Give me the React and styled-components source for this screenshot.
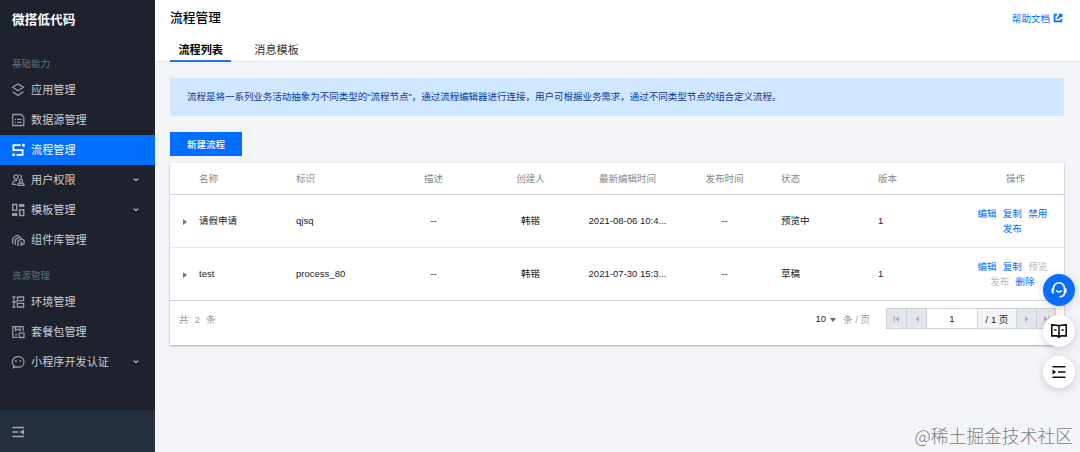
import React, { useState } from 'react';
import styled, { createGlobalStyle } from 'styled-components';

const GlobalStyle = createGlobalStyle`
  * {
    box-sizing: border-box;
  }

  body {
    margin: 0;
    font-family: 'Liberation Sans', 'Noto Sans CJK SC', sans-serif;
    font-size: 9.54px;
    color: #222;
  }

  button {
    font-family: inherit;
    border: 0;
    padding: 0;
  }
`;

const Page = styled.div`
  display: flex;
  position: relative;
  width: 1080px;
  height: 452px;
  overflow: hidden;
  background: #f3f4f8;
`;

const Sidebar = styled.aside`
  display: flex;
  flex-direction: column;
  flex: none;
  width: 155px;
  background: #1e222d;
  color: #c9ccd2;
`;

const Brand = styled.div`
  height: 54px;
  padding: 9px 12px 0;
  color: #fff;
  font-size: 12.7px;
  font-weight: 700;
  line-height: 22px;
`;

const SectionTitle = styled.div`
  height: 21px;
  margin-top: ${(props) => (props.$spaced ? '11px' : '0')};
  padding-left: 12px;
  line-height: 20px;
  color: #5f7078;
`;

const Nav = styled.nav`
  flex: 1;
`;

const NavItem = styled.div`
  display: flex;
  align-items: center;
  height: 30px;
  padding: 0 15px 0 11px;
  font-size: 11.13px;
  background: ${(props) => (props.$active ? '#006eff' : 'transparent')};
  color: ${(props) => (props.$active ? '#fff' : 'inherit')};

  > svg:first-child {
    margin-right: 6px;
    color: ${(props) => (props.$active ? '#fff' : '#959aa3')};
  }

  span {
    flex: 1;
    line-height: 16px;
  }
`;

const Collapse = styled.div`
  height: 42px;
  padding: 15px 0 0 11px;
  background: #262f3d;
  color: #a2a8b1;
`;

const Main = styled.main`
  flex: 1;
  min-width: 0;
`;

const Header = styled.header`
  height: 62px;
  padding: 8px 17px 0 15px;
  background: #fff;
  border-bottom: 1px solid #e4e6ea;
`;

const HeaderTop = styled.div`
  display: flex;
  justify-content: space-between;
  height: 32px;

  h1 {
    margin: 0;
    font-size: 12.72px;
    font-weight: 500;
    line-height: 19px;
    color: #000;
  }
`;

const HelpLink = styled.a`
  display: flex;
  align-items: center;
  gap: 3px;
  height: 20px;
  color: #006eff;
`;

const Tabs = styled.div`
  display: flex;
  gap: 15px;
`;

const Tab = styled.div`
  height: 22px;
  padding: 0 8px 0 8.4px;
  font-size: 11.13px;
  line-height: 21px;
  color: ${(props) => (props.$active ? '#000' : '#333')};
  font-weight: ${(props) => (props.$active ? 700 : 400)};
  border-bottom: 2px solid ${(props) => (props.$active ? '#1f75e8' : 'transparent')};
`;

const Content = styled.div`
  padding: 16px 16px 0 15px;
`;

const Notice = styled.div`
  height: 38px;
  padding-left: 17px;
  line-height: 38px;
  letter-spacing: -0.05px;
  white-space: nowrap;
  background: #cfe7ff;
  color: #0c3a9c;
`;

const CreateButton = styled.button`
  display: block;
  width: 72px;
  height: 24px;
  margin: 16px 0 7px;
  background: #006eff;
  color: #fff;
  font-size: 9.54px;
  font-weight: 500;
`;

const TableCard = styled.section`
  height: 182px;
  background: #fff;
  box-shadow: 0 1px 2px rgba(40, 50, 60, 0.4);
`;

const Row = styled.div`
  display: grid;
  grid-template-columns: 21px repeat(9, 97px);
  align-items: center;
  height: ${(props) => (props.$head ? 32 : 53)}px;
  border-bottom: 1px solid ${(props) => (props.$light ? '#e8eaed' : '#d3d6d9')};
  color: ${(props) => (props.$head ? '#888' : '#222')};
`;

const Cell = styled.div`
  padding: 0 8px;
  line-height: 14px;
  text-align: ${(props) => props.$align || 'left'};
  white-space: nowrap;
`;

const Expand = styled.div`
  margin: 2px 0 0 13px;
  width: 0;
  border: solid transparent;
  border-width: 3px 0 3px 4px;
  border-left-color: #777;
`;

const Actions = styled.div`
  display: flex;
  flex-wrap: wrap;
  justify-content: center;
  padding: 1px 8px 0;
`;

const Action = styled.a`
  margin-right: 6.3px;
  line-height: 14.8px;
  color: ${(props) => (props.$disabled ? '#bbb' : '#006eff')};
`;

const Footer = styled.div`
  display: flex;
  align-items: center;
  height: 35px;
  padding: 0 8px 0 9px;
  color: #999;
`;

const Total = styled.div`
  flex: 1;
  word-spacing: 3.4px;
`;

const PageSize = styled.div`
  display: flex;
  align-items: center;
  margin-right: 16px;

  b {
    font-weight: 400;
    color: #222;
  }
`;

const Caret = styled.i`
  margin: 2px 7px 0 4px;
  border: solid transparent;
  border-width: 4px 3px 0;
  border-top-color: #666;
`;

const Pager = styled.div`
  display: flex;
  height: 21px;
  border: 1px solid #cdd2d9;
  color: #222;
`;

const PagerCell = styled.div`
  display: flex;
  align-items: center;
  justify-content: center;
  width: ${(props) => props.$width || 20}px;
  background: ${(props) => props.$bg || '#e2e5ec'};
  color: ${(props) => (props.$bg ? '#222' : '#a8adb7')};

  & + & {
    border-left: 1px solid #cdd2d9;
  }
`;

const FloatTools = styled.div`
  position: absolute;
  right: 5px;
  top: 274px;
  display: flex;
  flex-direction: column;
  gap: 9px;
`;

const FloatButton = styled.button`
  display: flex;
  align-items: center;
  justify-content: center;
  width: 32px;
  height: 32px;
  border-radius: 50%;
  background: ${(props) => (props.$primary ? '#0a6dfb' : '#fff')};
  color: ${(props) => (props.$primary ? '#fff' : '#111')};
  box-shadow: 0 2px 8px rgba(60, 70, 100, 0.22);
`;

const Watermark = styled.div`
  position: absolute;
  right: 7px;
  bottom: 4px;
  font-family: 'Noto Sans CJK SC', sans-serif;
  font-size: 17.8px;
  font-weight: 300;
  line-height: 26px;
  color: #7c7d83;
`;

const icons = {
  app: (
    <>
      <path d="M7 .9 12.4 4.3 7 7.7 1.6 4.3Z" />
      <path d="M1.6 8.8 7 12.4l5.4-3.6" />
    </>
  ),
  data: (
    <>
      <path d="M1.8 1.5h8.4l2.6 2.7v8.3h-11Z" />
      <path d="M4 6.4h1M6 6.4h4.6M4 9.4h1M6 9.4h4.6" />
    </>
  ),
  flow: (
    <>
      <path d="M9.6 2.1H2.4v5h9.2v4.8H5.5" strokeWidth="1.9" />
      <path d="M11 .8h2.7v2.7H11zM1.3 10.4H4v2.7H1.3z" fill="currentColor" stroke="none" />
    </>
  ),
  user: (
    <>
      <circle cx="5" cy="4" r="2.1" />
      <path d="M6.2 7.4C3.3 7 1.6 8.6 1.6 11.3h4M8.2 1.9c2.3.1 2.8 2.3 1.6 3.5" />
      <circle cx="10" cy="7.8" r="1.6" />
      <path d="M7 12.3c0-3.2 6-3.2 6 0Z" />
    </>
  ),
  template: (
    <>
      <path d="M1.7 1.6h4v5.6h-4zM8.7 6.8h4v5.6h-4z" strokeWidth="1.5" />
      <path d="M1 10h5.4v3H1zM8 .9h5.4v3H8z" fill="currentColor" stroke="none" />
    </>
  ),
  component: (
    <>
      <path d="M1.7 10.7V5.3l4.4-3 1.5.8M4.3 12V6.7l4.3-2.9 1.5.7" />
      <path d="M7 13V7.9l3.2-2.3 2.9 1.7v3.2l-2.9 1.6V8.6" />
    </>
  ),
  env: (
    <>
      <path d="M2.9 1.5v11M1.2 2h3.2M1.2 7h5.2M1.2 12h3.2" />
      <path d="M6.4 2h6.2v3.6H6.4zM6.4 8.4h6.2V12H6.4z" />
    </>
  ),
  pack: (
    <>
      <path d="M6.4 12.3H1.8V1.6h10.4v5M4.5 1.8v3.9l2.3-1.4 2.3 1.4V1.8" />
      <path d="M8.2 8.2h4.8v4.3H8.2zM3.9 9.6h2.3" />
    </>
  ),
  chat: (
    <>
      <path d="M3 10.8C-.7 7.4 2 1.6 7.2 1.6c7.7 0 7.7 10.6 0 10.6-1.1 0-2-.2-2.7-.5L2.4 12.7Z" />
      <path d="M4.9 5v1.8M9.4 5v1.8" strokeWidth="1.5" />
    </>
  ),
  collapse: (
    <>
      <path d="M1.4 2.5h11.6M1.4 7h6M1.4 11.5h11.6" />
      <path d="M8.6 7 13 4.4v5.2Z" fill="currentColor" stroke="none" />
    </>
  ),
};

function Icon({ name }) {
  return (
    <svg width="14" height="14" viewBox="0 0 14 14" fill="none" stroke="currentColor" strokeWidth="1.3">
      {icons[name]}
    </svg>
  );
}

function Arrow({ flip, bar }) {
  return (
    <svg width="8" height="8" viewBox="0 0 8 8" fill="currentColor" transform={flip ? 'scale(-1 1)' : undefined}>
      <path d="M6 1v6L2.4 4Z" />
      {bar && <path d="M.8 1h1.1v6H.8z" />}
    </svg>
  );
}

const basicMenu = [
  { icon: 'app', label: '应用管理' },
  { icon: 'data', label: '数据源管理' },
  { icon: 'flow', label: '流程管理' },
  { icon: 'user', label: '用户权限', expandable: true },
  { icon: 'template', label: '模板管理', expandable: true },
  { icon: 'component', label: '组件库管理' },
];

const resourceMenu = [
  { icon: 'env', label: '环境管理' },
  { icon: 'pack', label: '套餐包管理' },
  { icon: 'chat', label: '小程序开发认证', expandable: true },
];

const columns = [
  { key: 'name', title: '名称' },
  { key: 'id', title: '标识' },
  { key: 'desc', title: '描述', align: 'center' },
  { key: 'creator', title: '创建人', align: 'center' },
  { key: 'edited', title: '最新编辑时间', align: 'center' },
  { key: 'published', title: '发布时间', align: 'center' },
  { key: 'status', title: '状态' },
  { key: 'version', title: '版本' },
];

const rows = [
  {
    name: '请假申请',
    id: 'qjsq',
    desc: '--',
    creator: '韩锴',
    edited: '2021-08-06 10:4...',
    published: '--',
    status: '预览中',
    version: '1',
    actions: ['编辑', '复制', '禁用', '发布'],
    disabled: [],
  },
  {
    name: 'test',
    id: 'process_80',
    desc: '--',
    creator: '韩锴',
    edited: '2021-07-30 15:3...',
    published: '--',
    status: '草稿',
    version: '1',
    actions: ['编辑', '复制', '预览', '发布', '删除'],
    disabled: ['预览', '发布'],
  },
];

function Menu({ items, active, onSelect }) {
  return items.map((item) => (
    <NavItem key={item.label} $active={item.label === active} onClick={() => onSelect(item.label)}>
      <Icon name={item.icon} />
      <span>{item.label}</span>
      {item.expandable && (
        <svg width="8" height="8" viewBox="0 0 8 8" fill="none" stroke="#b5b9c0" strokeWidth="1.2">
          <path d="M1.8 2.5 4 4.6l2.2-2.1" />
        </svg>
      )}
    </NavItem>
  ));
}

function App() {
  const [menu, setMenu] = useState('流程管理');
  const [tab, setTab] = useState('流程列表');

  return (
    <Page>
      <GlobalStyle />
      <Sidebar>
        <Brand>微搭低代码</Brand>
        <Nav>
          <SectionTitle>基础能力</SectionTitle>
          <Menu items={basicMenu} active={menu} onSelect={setMenu} />
          <SectionTitle $spaced>资源管理</SectionTitle>
          <Menu items={resourceMenu} active={menu} onSelect={setMenu} />
        </Nav>
        <Collapse>
          <Icon name="collapse" />
        </Collapse>
      </Sidebar>

      <Main>
        <Header>
          <HeaderTop>
            <h1>流程管理</h1>
            <HelpLink>
              帮助文档
              <svg width="10" height="10" viewBox="0 0 10 10" fill="none" stroke="currentColor" strokeWidth="1.7">
                <path d="M4 1.6H1.6v6.8h6.8V6M5.7 1.5h2.8v2.8M8.3 1.7 4.2 5.8" />
              </svg>
            </HelpLink>
          </HeaderTop>
          <Tabs>
            {['流程列表', '消息模板'].map((label) => (
              <Tab key={label} $active={tab === label} onClick={() => setTab(label)}>
                {label}
              </Tab>
            ))}
          </Tabs>
        </Header>

        <Content>
          <Notice>
            流程是将一系列业务活动抽象为不同类型的"流程节点"，通过流程编辑器进行连接，用户可根据业务需求，通过不同类型节点的组合定义流程。
          </Notice>
          <CreateButton>新建流程</CreateButton>
          <TableCard>
            <Row $head>
              <div />
              {columns.map((col) => (
                <Cell key={col.key} $align={col.align}>
                  {col.title}
                </Cell>
              ))}
              <Cell $align="center">操作</Cell>
            </Row>
            {rows.map((row, index) => (
              <Row key={row.id} $light={index < rows.length - 1}>
                <Expand />
                {columns.map((col) => (
                  <Cell key={col.key} $align={col.align}>
                    {row[col.key]}
                  </Cell>
                ))}
                <Actions>
                  {row.actions.map((action) => (
                    <Action key={action} $disabled={row.disabled.includes(action)}>
                      {action}
                    </Action>
                  ))}
                </Actions>
              </Row>
            ))}
            <Footer>
              <Total>共 2 条</Total>
              <PageSize>
                <b>10</b>
                <Caret />
                条 / 页
              </PageSize>
              <Pager>
                <PagerCell $width={19}>
                  <Arrow bar />
                </PagerCell>
                <PagerCell>
                  <Arrow />
                </PagerCell>
                <PagerCell $width={51} $bg="#fff">
                  1
                </PagerCell>
                <PagerCell $width={39} $bg="#f2f3f5">
                  / 1 页
                </PagerCell>
                <PagerCell>
                  <Arrow flip />
                </PagerCell>
                <PagerCell $width={19}>
                  <Arrow flip bar />
                </PagerCell>
              </Pager>
            </Footer>
          </TableCard>
        </Content>
      </Main>

      <FloatTools>
        <FloatButton $primary>
          <svg width="18" height="18" viewBox="0 0 18 18" fill="none" stroke="currentColor" strokeWidth="1.6">
            <path d="M3.5 9V7.3a5.5 5.5 0 0 1 11 0v4.2c0 2.4-1.6 4.2-5 4.2" />
            <path d="M1.4 7.5h2.4v5H2.6L1.4 11.3zM14.2 7.5h2.4v3.8l-1.2 1.2h-1.2z" fill="currentColor" stroke="none" />
            <path d="M6.4 9.5c1.2 1.9 4 1.9 5.2 0" />
          </svg>
        </FloatButton>
        <FloatButton>
          <svg width="18" height="18" viewBox="0 0 18 18" fill="none" stroke="currentColor" strokeWidth="1.6">
            <path d="M9 4.2C7.8 3 6.5 2.9 1.8 2.9v11H7L9 15.2l2-1.3h5.2v-11c-4.7 0-6 .1-7.2 1.3v11" />
            <path d="M4.2 8h2.3M11.5 8h2.3" />
          </svg>
        </FloatButton>
        <FloatButton>
          <svg width="16" height="16" viewBox="0 0 16 16" fill="none" stroke="currentColor" strokeWidth="1.6">
            <path d="M1.5 2.8h13M7 8h7.5M1.5 13.2h13" />
            <path d="M1.5 5.5v5L5.3 8Z" fill="currentColor" stroke="none" />
          </svg>
        </FloatButton>
      </FloatTools>
      <Watermark>@稀土掘金技术社区</Watermark>
    </Page>
  );
}

export default App;
